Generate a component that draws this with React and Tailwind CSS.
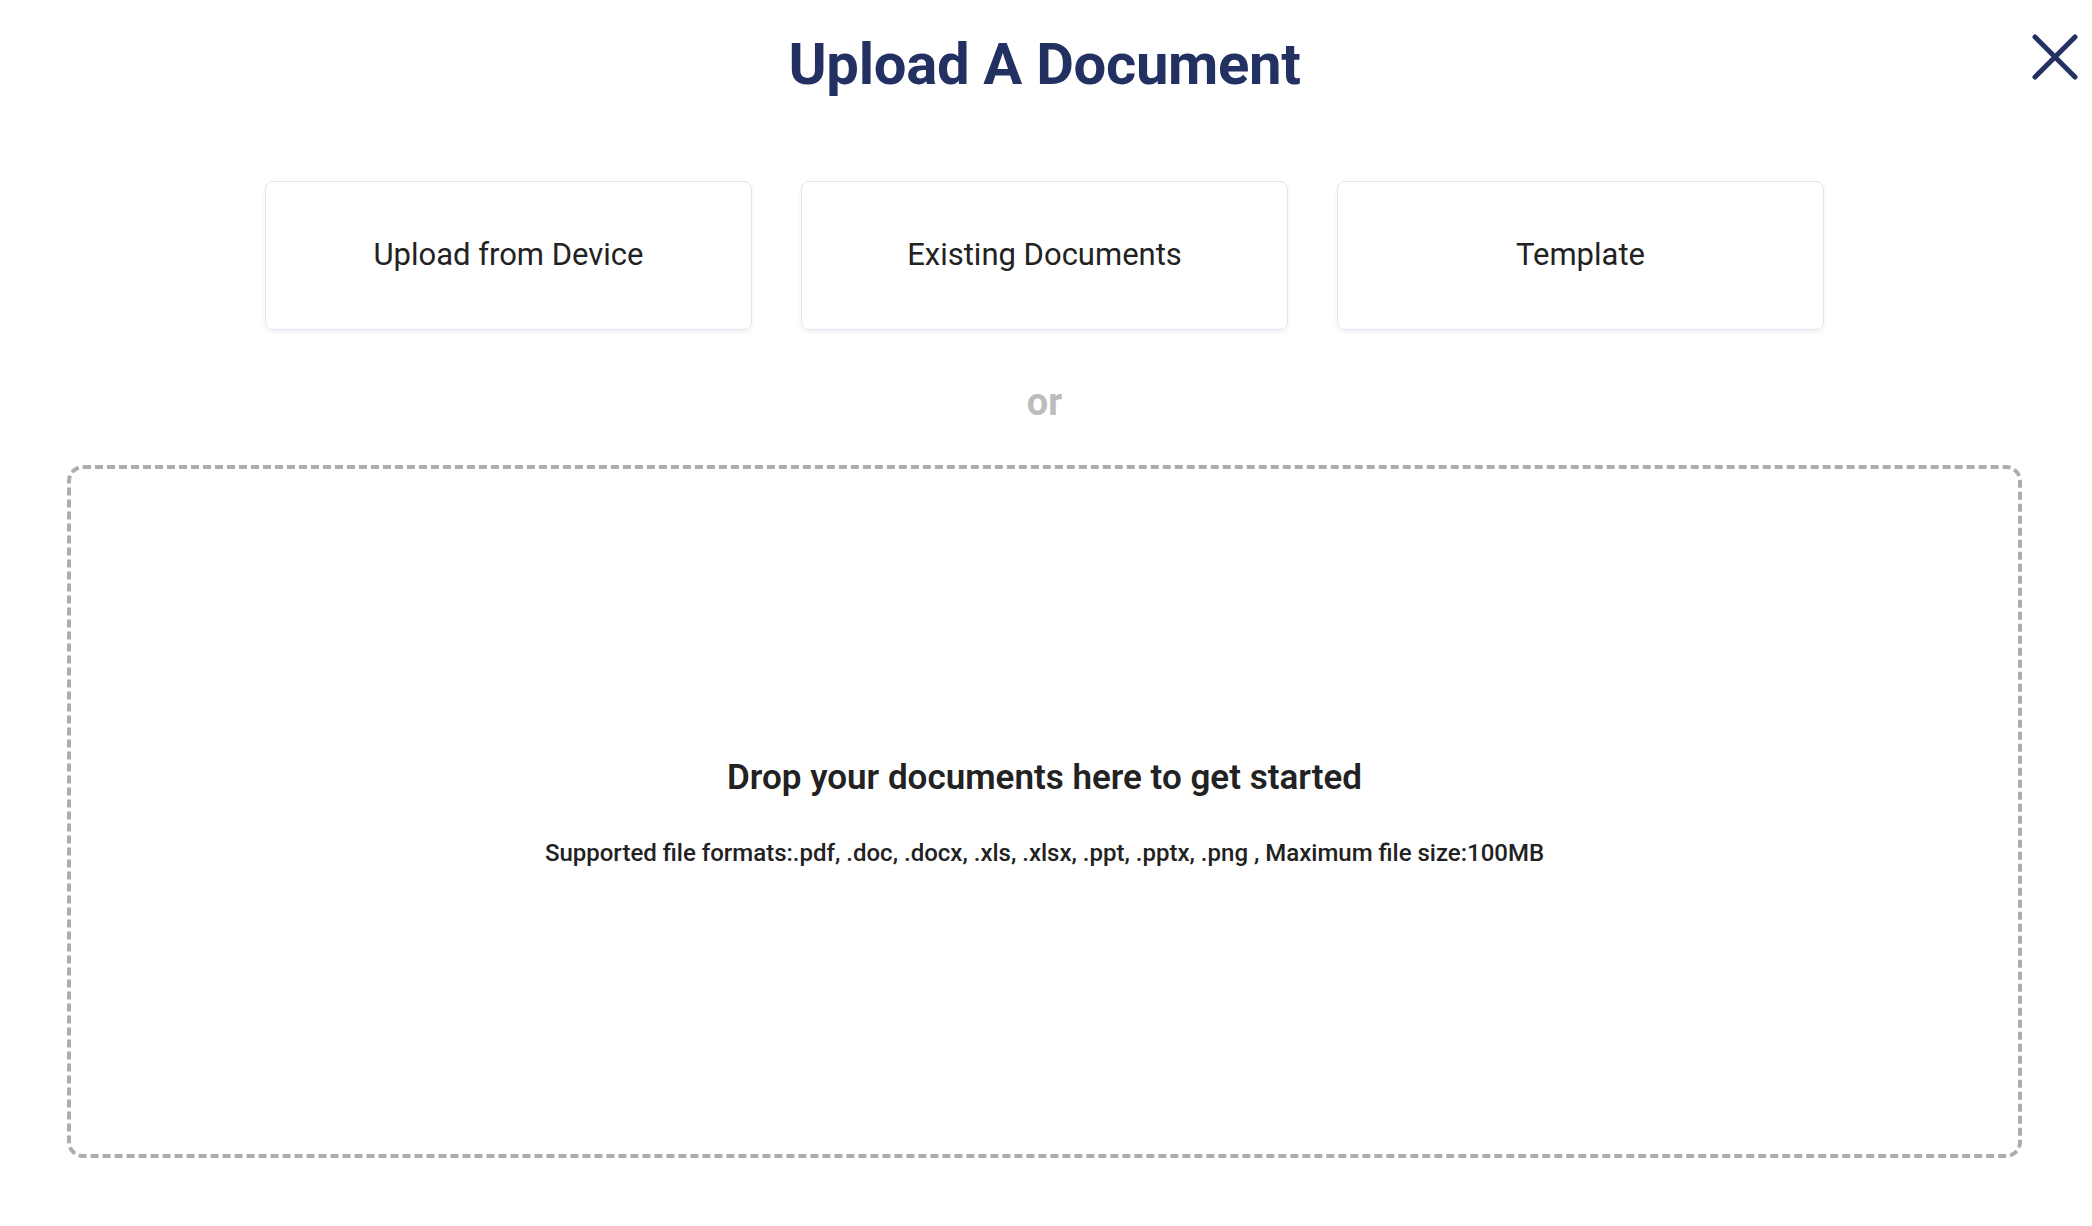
export default function App() {
  const f = { fontFamily: "Roboto, 'Liberation Sans', sans-serif" };
  return (
    <div style={f} className="relative w-[2092px] h-[1226px] bg-white">
      <div className="flex flex-col items-center pl-[67px] pr-[70px]">
        <h1 className="mt-[28px] h-[72px] flex items-center text-[58px] font-bold text-[#223062] tracking-[-0.3px]">Upload A Document</h1>
        <div className="mt-[81px] flex gap-[49px]">
          {["Upload from Device", "Existing Documents", "Template"].map((t) => (
            <div key={t} className="w-[487px] h-[149px] rounded-[8px] border border-[#e4e4f5] shadow-[0_2px_4px_rgba(60,60,120,0.08)] flex items-center justify-center text-[31px] text-[#222]">{t}</div>
          ))}
        </div>
        <div className="mt-[42px] h-[60px] flex items-center text-[38px] font-bold text-[#bcbcbc]">or</div>
        <div className="mt-[33px] w-full h-[693px] rounded-[16px] border-[4px] border-dashed border-[#adadad] flex flex-col items-center">
          <div className="mt-[283px] text-[35px] font-semibold text-[#222]">Drop your documents here to get started</div>
          <div className="mt-[30px] text-[24px] font-medium text-[#222]">Supported file formats:.pdf, .doc, .docx, .xls, .xlsx, .ppt, .pptx, .png , Maximum file size:100MB</div>
        </div>
      </div>
      <svg className="absolute left-[2030px] top-[32px]" width="50" height="50" viewBox="0 0 50 50" fill="none" stroke="#223062" strokeWidth="5" strokeLinecap="round">
        <path d="M5 5 L45 45 M45 5 L5 45" />
      </svg>
    </div>
  );
}
